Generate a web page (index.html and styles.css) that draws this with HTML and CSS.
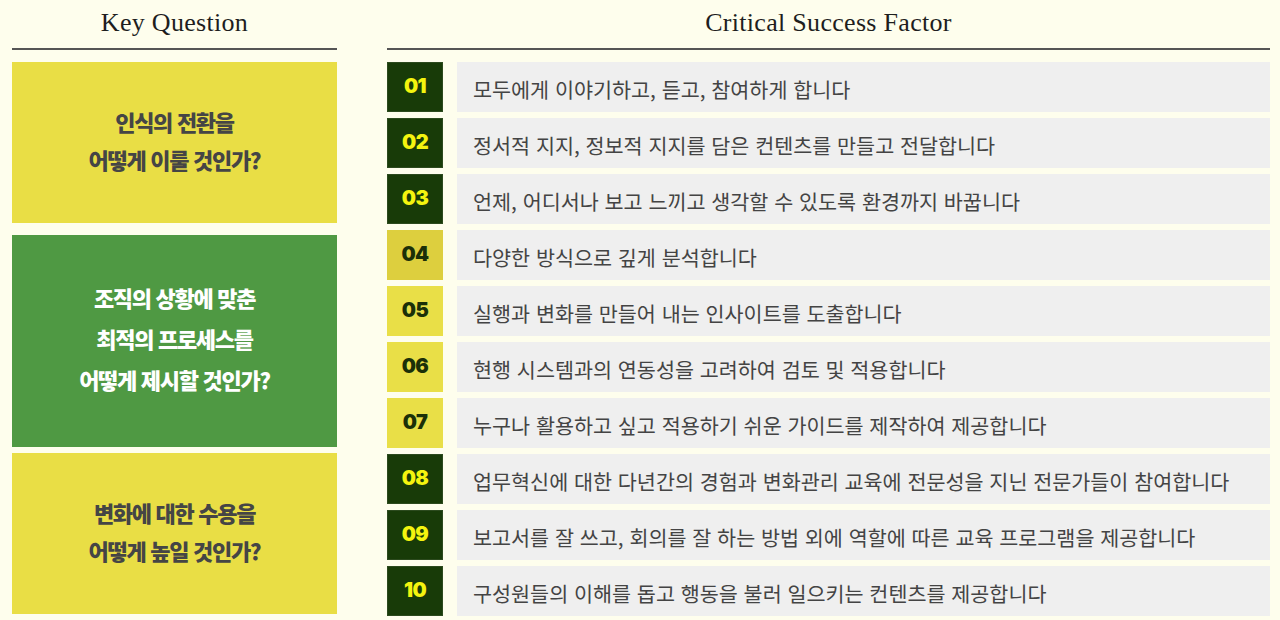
FILE: index.html
```html
<!DOCTYPE html>
<html lang="ko">
<head>
<meta charset="utf-8">
<link rel="stylesheet" href="styles.css">
</head>
<body>
<div class="page">
  <section class="col col-left">
    <h2 class="col-title">Key Question</h2>
    <div class="questions">
      <div class="q q-yellow q-first"><p>인식의 전환을<br>어떻게 이룰 것인가?</p></div>
      <div class="q q-green"><p>조직의 상황에 맞춘<br>최적의 프로세스를<br>어떻게 제시할 것인가?</p></div>
      <div class="q q-yellow q-last"><p>변화에 대한 수용을<br>어떻게 높일 것인가?</p></div>
    </div>
  </section>
  <section class="col col-right">
    <h2 class="col-title">Critical Success Factor</h2>
    <div class="factors">
      <div class="row"><div class="num num-dark">01</div><div class="txt">모두에게 이야기하고, 듣고, 참여하게 합니다</div></div>
      <div class="row"><div class="num num-dark">02</div><div class="txt">정서적 지지, 정보적 지지를 담은 컨텐츠를 만들고 전달합니다</div></div>
      <div class="row"><div class="num num-dark">03</div><div class="txt">언제, 어디서나 보고 느끼고 생각할 수 있도록 환경까지 바꿉니다</div></div>
      <div class="row"><div class="num num-ochre">04</div><div class="txt">다양한 방식으로 깊게 분석합니다</div></div>
      <div class="row"><div class="num num-yellow">05</div><div class="txt">실행과 변화를 만들어 내는 인사이트를 도출합니다</div></div>
      <div class="row"><div class="num num-yellow">06</div><div class="txt">현행 시스템과의 연동성을 고려하여 검토 및 적용합니다</div></div>
      <div class="row"><div class="num num-yellow">07</div><div class="txt">누구나 활용하고 싶고 적용하기 쉬운 가이드를 제작하여 제공합니다</div></div>
      <div class="row"><div class="num num-dark">08</div><div class="txt">업무혁신에 대한 다년간의 경험과 변화관리 교육에 전문성을 지닌 전문가들이 참여합니다</div></div>
      <div class="row"><div class="num num-dark">09</div><div class="txt">보고서를 잘 쓰고, 회의를 잘 하는 방법 외에 역할에 따른 교육 프로그램을 제공합니다</div></div>
      <div class="row"><div class="num num-dark">10</div><div class="txt">구성원들의 이해를 돕고 행동을 불러 일으키는 컨텐츠를 제공합니다</div></div>
    </div>
  </section>
</div>
</body>
</html>
```

FILE: styles.css
```css
* { box-sizing: border-box; }
html, body { margin: 0; padding: 0; }
body {
  background: #fefeed;
  width: 1280px;
  height: 620px;
  overflow: hidden;
}
.page {
  display: grid;
  grid-template-columns: 325px 883px;
  column-gap: 50px;
  padding-left: 12px;
}
.col-title {
  margin: 0;
  height: 50px;
  padding-top: 6px;
  border-bottom: 2px solid #555;
  text-align: center;
  font-family: "Liberation Serif", "DejaVu Serif", serif;
  font-weight: 400;
  font-size: 26px;
  line-height: 34px;
  color: #1e1e1e;
  letter-spacing: 0.3px;
}
.questions {
  margin-top: 12px;
  display: flex;
  flex-direction: column;
}
.q {
  display: flex;
  align-items: center;
  justify-content: center;
  text-align: center;
  padding-bottom: 6px;
}
.q p {
  margin: 0;
  font-family: "Noto Sans CJK KR", "Noto Sans", sans-serif;
  font-weight: 900;
  font-size: 22px;
  line-height: 38px;
  letter-spacing: -1.3px;
}
.q-yellow { background: #e9de45; color: #454545; }
.q-green { background: #4f9943; color: #ffffff; }
.q-first { height: 161px; }
.q-green { height: 212px; margin-top: 12px; }
.q-green p { line-height: 41px; }
.q-last { height: 161px; margin-top: 6px; }

.factors {
  margin-top: 12px;
  display: flex;
  flex-direction: column;
  gap: 6px;
}
.row {
  display: flex;
  height: 50px;
  gap: 14px;
}
.num {
  width: 56px;
  flex: none;
  display: flex;
  align-items: center;
  justify-content: center;
  font-family: "Inter", "Lato", sans-serif;
  font-weight: 900;
  font-size: 20px;
  letter-spacing: -0.6px;
  padding-bottom: 3px;
}
.num-dark { background: #183b08; color: #f4f40f; border: 1px solid #2c4a1e; }
.num-ochre { background: #ddcf3e; color: #1b3008; }
.num-yellow { background: #e9df47; color: #1b3008; }
.txt {
  flex: 1;
  background: #efefef;
  display: flex;
  align-items: center;
  padding-left: 16px;
  padding-top: 4px;
  font-family: "Noto Sans CJK KR", "Noto Sans", sans-serif;
  font-weight: 400;
  font-size: 20.7px;
  color: #444;
  letter-spacing: 0;
}
```
